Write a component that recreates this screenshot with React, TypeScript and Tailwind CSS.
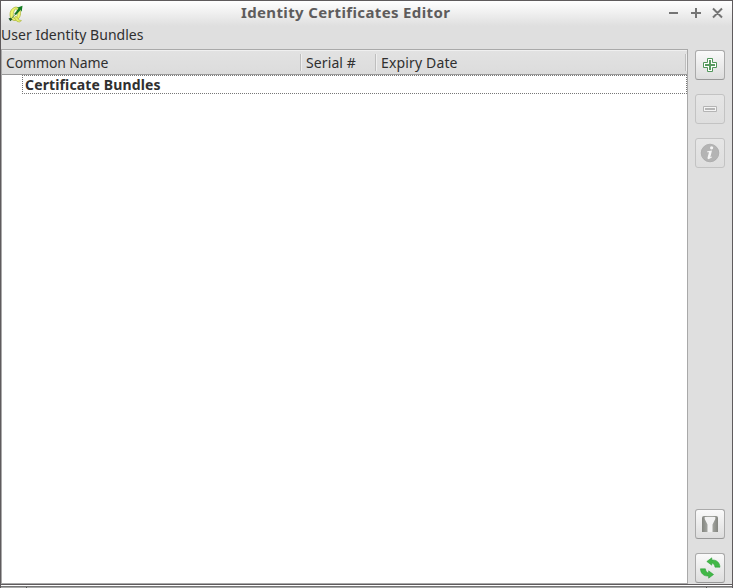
import type { ReactNode } from "react";

function ToolButton({ children, disabled = false, className = "" }: { children: ReactNode; disabled?: boolean; className?: string }) {
  return (
    <button
      disabled={disabled}
      className={`flex h-[30px] w-[30px] shrink-0 items-center justify-center rounded-[3px] border ${
        disabled
          ? "border-[#c3c3c3] bg-linear-to-b from-[#e6e6e6] to-[#dedede]"
          : "border-[#aaaaaa] border-b-[#989898] bg-linear-to-b from-[#fafafa] to-[#dddddd]"
      } ${className}`}
    >
      {children}
    </button>
  );
}

function AppLogo() {
  return (
    <svg width="16" height="18" viewBox="0 0 16 18" fill="none">
      <path d="M7 2.200C3.600 3.200 1.800 6.500 2 10.200c.2 3.400 2.200 5.500 5 5.300 3.600-.4 5.800-4.200 5.500-8.200C12.200 3.700 9.800 1.600 7 2.200Z" stroke="#aeb63c" strokeWidth=".8" fill="#eef56e" />
      <path d="M7.200 4C5.400 6 4.600 11 5.700 13.200c2.300 1.200 4.300-2.500 4-6.500-.2-2-1-3.200-2.500-2.700Z" stroke="#a8b044" strokeWidth=".7" fill="#f7f7f0" />
      <path d="M7 11.500l2 .5 2 3 2.500.6-2 1.400-2.500-.5-2.500-3.500Z" fill="#e4ef66" stroke="#a8b038" strokeWidth=".6" />
      <path d="M7 9.500 12 4" stroke="#187526" strokeWidth="2" />
      <path d="M3.500 13.500 7 9.500" stroke="#5e9850" strokeWidth="1" />
      <path d="m9 2.800 5.500-2.100-.8 6-1.500-2.300-2.700 2.500-1.100-.8 2.200-2.600Z" fill="#137b20" />
      <path d="M.5 13.500l2-.8 2 1.600-2.200 2Z" fill="#22582a" />
    </svg>
  );
}

function HeaderCell({ children, className }: { children: ReactNode; className: string }) {
  return (
    <div className={`flex h-[17px] items-center border-r border-[#bebebe] shadow-[1px_0_0_#efefef] ${className}`}>
      {children}
    </div>
  );
}

export default function App() {
  return (
    <div className="flex h-[588px] w-[733px] flex-col overflow-hidden bg-[#dfdfdf] font-['Noto_Sans','Open_Sans',sans-serif] text-[14px] leading-[20px] whitespace-nowrap text-[#303030]">
      <div className="flex h-[584px] flex-col border-x border-t border-[#5f5b5d]">
        <header className="flex h-[25px] shrink-0 items-center bg-linear-to-b from-[#ffffff] to-[#dfdfdf] pl-[7px]">
          <AppLogo />
          <h1 className="ml-[217px] w-[420px] pb-[4px] text-[15px] font-bold tracking-[0.36px] text-[#5e5c5c]">Identity Certificates Editor</h1>
          <svg width="60" height="16" viewBox="0 0 60 16" className="mr-[6px] ml-auto shrink-0" fill="none" stroke="#747474" strokeWidth="2">
            <path d="M3 7h9M25 7h10M30 2v10M47 2.500l9 9M56 2.500l-9 9" />
          </svg>
        </header>
        <div className="h-[23px] shrink-0 leading-[18px] tracking-[0.03px]">User Identity Bundles</div>
        <div className="flex min-h-0 grow">
          <section className="flex w-[687px] flex-col border border-[#a9a9a9] bg-white">
            <div className="flex h-[25px] shrink-0 items-center border-t border-b border-t-[#f0f0f0] border-b-[#999999] bg-linear-to-b from-[#e2e2e2] to-[#dcdcdc]">
              <HeaderCell className="w-[299px] pl-[4px] tracking-[-0.13px]">Common Name</HeaderCell>
              <HeaderCell className="w-[75px] pl-[5px] tracking-[0.1px]">Serial #</HeaderCell>
              <HeaderCell className="w-[310px] pl-[5px] tracking-[0.15px]">Expiry Date</HeaderCell>
            </div>
            <div className="ml-[20px] flex h-[19px] shrink-0 items-center border border-dotted border-[#777777] pl-[2px] font-bold tracking-[0.14px]">
              Certificate Bundles
            </div>
          </section>
          <aside className="-mb-px flex grow flex-col items-start gap-[14px] pt-[1px] pb-[2px] pl-[7px]">
            <ToolButton>
              <svg width="16" height="16" viewBox="0 0 16 16" fill="none">
                <path d="M5.500 1.500h5v4h4v5h-4v4h-5v-4h-4v-5h4Z" fill="#fff" stroke="#51965a" />
                <path d="M8 3v10M3 8h10" stroke="#58995f" strokeWidth="2" />
              </svg>
            </ToolButton>
            <ToolButton disabled>
              <svg width="16" height="16" viewBox="0 0 16 16" fill="none">
                <path d="M1.500 5.500h13v5h-13Z" fill="#f4f4f4" stroke="#b4b4b4" />
                <path d="M3 8h10" stroke="#b5b5b5" strokeWidth="2" />
              </svg>
            </ToolButton>
            <ToolButton disabled>
              <svg width="20" height="20" viewBox="0 0 20 20">
                <circle cx="10" cy="10" r="8.800" fill="#b4b4b4" stroke="#a8a8a8" strokeWidth=".8" />
                <circle cx="11.600" cy="4.800" r="1.600" fill="#f5f5f5" />
                <path d="M7.300 8.300 12 7.500 10.300 14.300l1.800-.9-.3 1.200-3.300 1.700-1.100-1 1.600-6H7.100Z" fill="#f5f5f5" />
              </svg>
            </ToolButton>
            <ToolButton className="mt-auto">
              <svg width="18" height="18" viewBox="0 0 18 18">
                <defs>
                  <linearGradient id="filterShade" x1="0" y1="0" x2="1" y2="0">
                    <stop offset="0" stopColor="#83857f" />
                    <stop offset=".35" stopColor="#a3a5a0" />
                    <stop offset=".65" stopColor="#a3a5a0" />
                    <stop offset="1" stopColor="#83857f" />
                  </linearGradient>
                </defs>
                <path d="M1 3q0-2 2-2h12q2 0 2 2v14H1Z" fill="url(#filterShade)" />
                <path d="M3.700 2h10.600v2L11.500 9.500V17h-5V9.500L3.700 4Z" fill="#f2f2f2" />
              </svg>
            </ToolButton>
            <ToolButton>
              <svg width="22" height="22" viewBox="0 0 22 22" fill="#42b847" stroke="#259b30" strokeWidth=".5">
                <path d="M7.800 4.500 12.800 .8V3C17.500 2.500 20.800 5.500 21 10.200H16C15.600 7.800 14.500 6.300 12.800 6V8.200Z" />
                <path d="M14.600 17.500 9.600 21.200V19C4.900 19.500 1.600 16.500 1.400 11.800H6.400C6.800 14.200 7.900 15.700 9.600 16V13.800Z" />
              </svg>
            </ToolButton>
          </aside>
        </div>
      </div>
      <footer className="flex h-[4px] shrink-0 flex-col border-x border-t border-[#5f5b5d] bg-white">
        <div className="mt-[1px] flex h-[2px] border-t border-[#777777] bg-[#aaaaaa]">
          <div className="w-[26px] border-r border-[#555555]" />
          <div className="w-[680px] border-r border-[#555555]" />
        </div>
      </footer>
    </div>
  );
}
